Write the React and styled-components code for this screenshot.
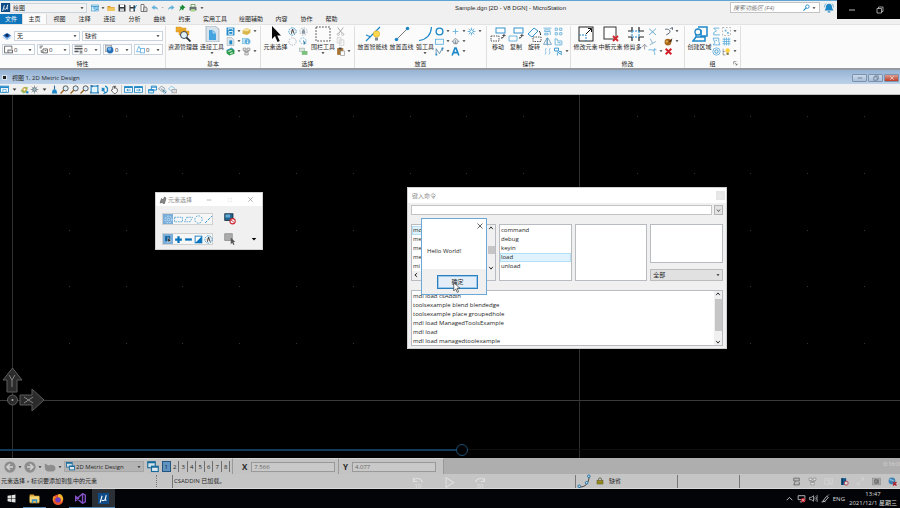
import * as React from 'react';

import styled, { createGlobalStyle } from 'styled-components';


const GlobalStyle = createGlobalStyle`
  * {
    box-sizing: border-box;
  }
  body {
    margin: 0;
    background-color: #000;
  }
  body, button, input, select {
    font-family: "Open Sans", "Noto Sans CJK SC", sans-serif;
    font-size: 6px;
    line-height: 8px;
    color: #262626;
  }
  button, select, input {
    appearance: none;
    margin: 0;
    padding: 0;
    border: 0;
    border-radius: 0;
    background: none;
    outline: none;
  }
  ul {
    margin: 0;
    padding: 0;
    list-style: none;
  }
  svg {
    display: block;
    flex: none;
  }
`

const B = '#1e88c9'
const L = '#62b0dc'
const G = '#555'

/* every drawing sits in a 16 x 16 box */
const icons = {
  mu: <><rect width="16" height="16" fill="#0d4a86" /><path d="M3 14 6 4M5.500 10c1 2 4 1 5-1L12 3M10.500 8c-.5 3 .5 3 2 2" stroke="#fff" strokeWidth="1.600" fill="none" /></>,
  layout: <><rect x="1" y="2" width="14" height="12" fill="#d9eefa" stroke={B} /><path d="M1 5h14M8 5v9M4 8h3M10 8h4M10 11h4" stroke={B} strokeWidth="1.500" /></>,
  folder: <><path d="M1 4h5l2 2h7v8H1z" fill="#d99a2b" /><path d="M3 7h13l-2 7H1z" fill="#f3c65c" /></>,
  save: <><path d="M1 1h12l2 2v12H1z" fill="#34383d" /><path d="M4 1h8v5H4z" fill="#fff" /><path d="M4 9h8v6H4z" fill="#c9ced3" /></>,
  saveSet: <><path d="M1 2h9l2 2v11H1z" fill="#34383d" /><path d="M3 2h6v4H3zM3 9h6v6H3z" fill="#fff" /><path d="M10 12 15 2" stroke={B} strokeWidth="2" /></>,
  compress: <><path d="M2 1h6v14H2z" fill="#fff" stroke={G} strokeWidth="1.500" /><path d="M8 6h4l2 3v6H7z" fill="#ddd" stroke={G} strokeWidth="1.500" /></>,
  undo: <path d="M7 2 1 7l6 5V9c4 0 6 1 7 4 0-5-3-8-7-8z" fill={L} />,
  redo: <path d="m9 2 6 5-6 5V9c-4 0-6 1-7 4 0-5 3-8 7-8z" fill={L} />,
  pin: <path d="m8 1 7 6-3 1-2 5-3-3-5 5 3-7-2-3 4 0z" fill="#198a35" />,
  print: <><path d="M4 1h8v5H4z" fill="#fff" stroke="#5a8f49" strokeWidth="1.500" /><rect x="1" y="6" width="14" height="7" fill="#6b7178" /><path d="M4 10h8v5H4z" fill="#a5d489" /></>,
  search: <><circle cx="10" cy="6" r="4" fill="none" stroke={B} strokeWidth="2" /><path d="m7 9-6 6" stroke={B} strokeWidth="2.500" /></>,
  bell: <><path d="M8 1c4 0 5 3 5 7l2 4H1l2-4c0-4 1-7 5-7M6 13h4v2H6z" fill={B} /><path d="M1 7c0-3 1-5 2-6M15 7c0-3-1-5-2-6" stroke={B} fill="none" /></>,
  gem: <><path d="m1 7 7-4 7 4-7 6z" fill="#5a9be0" /><path d="M3 7c3-4 7-4 10 0-3 4-7 4-10 0" fill="#2460b0" /><circle cx="8" cy="7" r="2.200" fill="#10264d" /><path d="m1 10 7 4 7-4" fill="none" stroke="#8fbbeb" /></>,
  level: <><path d="M1 2h13v5M6 14H1V2" fill="none" stroke={G} strokeWidth="1.500" /><rect x="7" y="9" width="8" height="5" fill="#eee" stroke={G} strokeWidth="1.500" /></>,
  lineStyle: <path d="M1 2h6M1 5h4M7 7h8v7H7zM10 10h3M4 9v4h3" fill="none" stroke={G} strokeWidth="1.500" />,
  weight: <path d="M1 2h14M1 6h14M1 7h14M1 11h7M1 12h7M10 11h5M10 14h5" stroke="#3a3f45" strokeWidth="1.600" />,
  ball: <><rect x="1" y="1" width="11" height="11" fill="#cfd8de" stroke="#888" /><circle cx="9" cy="9" r="6" fill="#2671b5" /><circle cx="8" cy="7" r="3" fill="#77b6ea" /></>,
  prio: <><path d="m5 2 5 10H1z" fill="none" stroke={L} strokeWidth="1.500" /><rect x="8" y="6" width="7" height="8" fill="#fff" stroke={L} strokeWidth="1.500" /></>,
  explorer: <><path d="M1 1h5l1 1h4v4H1zM4 4h5l1 1h4v4H4z" fill="#efab28" stroke="#c98a19" strokeWidth=".4" /><circle cx="9" cy="9" r="3.500" fill="#dff1fd" stroke="#2a333c" strokeWidth=".9" /><path d="m11.500 11.500 4 4" stroke="#2a333c" strokeWidth="1.800" /></>,
  attach: <><path d="M2 0h9l4 3v13H2z" fill="#d8e3ec" stroke="#9aa8b4" strokeWidth=".7" /><path d="M5 4h4l3 3v7H5z" fill="#43a4df" /><path d="M9 4v3h3" fill="none" stroke="#fff" strokeWidth=".6" /></>,
  models: <><rect x="1" y="1" width="14" height="14" fill={B} /><path d="M5 8h7v5H5zM4 6V3h8v3" fill="none" stroke="#fff" strokeWidth="1.500" /></>,
  doc: <><path d="M2 1h8l4 4v10H2z" fill="#e1e8ed" stroke="#9ba6af" /><path d="M6 6h5v7H6z" fill={B} /></>,
  green: <><path d="m1 6 9-4 5 4v6l-9 3-5-4z" fill="#2c9a4b" /><path d="m4 8 6-2M7 12l5-2" stroke="#c6ecd0" strokeWidth="2" /><path d="m1 6 9-4 5 4" fill="none" stroke={B} strokeWidth="1.500" /></>,
  cube: <><path d="m1 6 6-4 8 2v6l-6 4-8-2z" fill="#d9b64b" /><path d="m1 6 6-4 8 2-6 4z" fill="#f5e39b" /></>,
  info: <><rect x="1" y="3" width="10" height="9" fill="#bfe1f5" stroke={L} /><circle cx="10" cy="8" r="5" fill={L} /><path d="M10 5v1M10 8v3" stroke="#fff" strokeWidth="2" /></>,
  net: <path d="M2 2h5v4H2zM9 2h5v4H9zM5 10h6v4H5zM4 6v2h8V6M8 8v2" fill="#eee" stroke="#888" strokeWidth="1.300" />,
  arrow: <path d="m4 0 0 13 3-3 2.500 6 2.200-1-2.500-5.500H13z" fill="#0a0a0a" />,
  selAll: <><circle cx="8" cy="8" r="6.500" fill="none" stroke={B} strokeWidth="1.500" strokeDasharray="3 1.500" /><path d="m6 12 2-8 3 8M5 7h1M10 5h1" stroke="#222" strokeWidth="1.500" fill="none" /></>,
  selNone: <circle cx="8" cy="8" r="6.500" fill="none" stroke="#8b99a3" strokeWidth="1.300" strokeDasharray="2.500 2" />,
  selGrey: <><circle cx="8" cy="8" r="6.500" fill="none" stroke="#9fb3c0" strokeWidth="1.500" strokeDasharray="3 2" /><path d="M5 7h6v5H5zM6 7V4h4v3" fill="#8a97a0" /></>,
  selPrev: <><circle cx="7" cy="7" r="5.500" fill="none" stroke={L} strokeWidth="1.500" strokeDasharray="3 2" /><path d="m7 5 2 9 2-3 3 2z" fill="#3c7fa8" /></>,
  display: <><rect x="1" y="2" width="9" height="6" fill="#d9e5dc" stroke="#9aa" /><path d="M5 7h10v7H5z" fill="#7cc07f" /></>,
  fence: <rect x="1" y="1" width="14" height="14" fill="none" stroke="#444" strokeWidth=".9" strokeDasharray="1.800 1.200" />,
  cut: <><path d="m3 1 8 10M13 1 5 11" stroke="#999" strokeWidth="1.500" /><circle cx="4" cy="13" r="2" fill="none" stroke="#999" /><circle cx="12" cy="13" r="2" fill="none" stroke="#999" /></>,
  copyDoc: <path d="M2 1h7v10H2zM6 5h8v10H6z" fill="#f5f5f5" stroke="#c4c4c4" />,
  paste: <><path d="M2 2h11v12H2z" fill="#a87435" /><path d="M5 1h5v3H5z" fill="#444" /><path d="M8 7h7v8H8z" fill="#fff" stroke="#777" /></>,
  smartLine: <><path d="M1 15 15 1M1 9l5 2" stroke={B} strokeWidth="1.200" /><circle cx="11.500" cy="8" r="3.200" fill="#ffd84d" stroke="#d8a41c" strokeWidth=".5" /><path d="M10 11.500h3v3h-3z" fill="#7f8a94" /></>,
  line: <><path d="M2 14 14 2" stroke="#555" strokeWidth=".8" /><circle cx="2.500" cy="13.500" r="1.800" fill={B} /><circle cx="13.500" cy="2.500" r="1.800" fill={B} /></>,
  arc: <path d="M14.500 1C14 8 10 13.500 2 14.500" fill="none" stroke={B} strokeWidth="1.200" />,
  circle: <circle cx="8" cy="8" r="6" fill="none" stroke={B} strokeWidth="2.500" />,
  block: <rect x="1" y="4" width="14" height="9" fill="#f2f9fd" stroke={L} strokeWidth="1.500" />,
  spline: <><path d="M2 14V3l6 9 5-10v5" fill="none" stroke="#5a88a3" strokeWidth="1.500" /><path d="M12 1h3v3h-3zM1 12h3v3H1z" fill={B} /></>,
  plus: <path d="M8 3v10M3 8h10" stroke={L} strokeWidth="1.500" />,
  hatch: <path d="m8 2 6 6-3 1v3H5V9L2 8zM8 6v6" fill="#dfe3e6" stroke="#65737d" strokeWidth="1.200" />,
  bigA: <path d="m2 15 5-13h2l5 13M4 10h8" fill="none" stroke={B} strokeWidth="2.800" />,
  star: <><path d="M8 1v14M1 8h14M3 3l10 10M13 3 3 13" stroke={L} strokeWidth="1.500" /><circle cx="8" cy="8" r="3" fill="#fff" stroke={B} /></>,
  move: <><rect x="6" y="2" width="9" height="5" fill="#fff" stroke={B} strokeWidth=".9" /><path d="M1 10h8v5H1z" fill="none" stroke="#444" strokeWidth=".9" strokeDasharray="1.500 1" /><path d="M11 12c2 0 3-1 3-3M12.500 10 14 8.500 15.500 10" fill="none" stroke="#222" /></>,
  copy: <><rect x="6" y="2" width="9" height="5" fill="#fff" stroke={B} strokeWidth=".9" /><path d="M1 10h8v5H1z" fill="none" stroke={L} strokeWidth=".9" /><path d="M11 12c2 0 3-1 3-3M12.500 10 14 8.500 15.500 10" fill="none" stroke="#222" /></>,
  rotate: <><path d="m2 8 6-6 4 3-6 6z" fill="#f4fbff" stroke={B} strokeWidth=".9" /><path d="M7 11h8v4.500H7z" fill="none" stroke="#444" strokeWidth=".9" strokeDasharray="1.500 1" /><path d="M13 5c1 1 1.500 2 1.500 4" fill="none" stroke="#222" /></>,
  align: <path d="M1 2h14M3 5h9v3H3zM3 11h6v3H3zM13 8v6" fill="none" stroke={L} strokeWidth="1.500" />,
  array: <path d="M2 2h4v4H2zM10 2h4v4h-4zM2 10h4v4H2zM10 10h4v4h-4z" fill="none" stroke={L} strokeWidth="1.500" />,
  mirror: <path d="M7 2v11H1zM9 2l6 11H9M8 1v14" fill="none" stroke="#5a95b7" strokeWidth="1.400" />,
  scale: <path d="M2 3v11h12V7H6V4zM6 10h5v2" fill="none" stroke={L} strokeWidth="1.500" />,
  parallel: <path d="M6 2c-4 4 2 7-3 12M13 2c-4 4 2 7-3 12" fill="none" stroke={L} strokeWidth="1.500" strokeDasharray="5 1" />,
  stretch: <path d="M1 2h7v5H1zM5 8l9 6M6 11v4M9 8h4v4" fill="none" stroke={B} strokeWidth="1.500" />,
  modify: <><rect x="1" y="1" width="14" height="14" fill="#fff" stroke="#222" /><path d="M1 9h7v6" fill="none" stroke={B} strokeDasharray="2 1" /><path d="m8 8 5-5M10 2.500h3.500V6" stroke="#111" fill="none" /></>,
  breakEl: <><rect x="1" y="1" width="12" height="12" fill="#fff" stroke="#333" /><path d="m10 10 5 5M15 10l-5 5" stroke="#d3262f" strokeWidth="1.800" /></>,
  trim: <><path d="M4 1v4M4 11v4M11 1v4M11 11v4M0 5h4M11 5h5M0 11h4M11 11h5" stroke="#222" strokeWidth="1.200" /><path d="M4 5v6M11 5v6M4 5h7M4 11h7" stroke={B} strokeDasharray="2 1" /></>,
  cross: <path d="m2 3 12 11M14 3 2 14" stroke="#4f9cc8" strokeWidth="1.500" />,
  corner: <path d="M3 14 14 8M8 11 4 3" stroke="#79aac6" strokeWidth="1.500" />,
  fillet: <path d="M1 5h5c5 0 6 3 6 9M12 2v4M9 5h6" fill="none" stroke={L} strokeWidth="1.500" />,
  curve: <path d="M2 4c7-1 11 3 7 7l-5 3M11 3l4-2v4" fill="none" stroke="#456" strokeWidth="1.600" />,
  paint: <><circle cx="7" cy="9" r="6" fill="#a8671e" /><path d="m8 8 7-6-2 7z" fill="#4b2b0d" /><circle cx="5" cy="8" r="2" fill="#e8b552" /></>,
  del: <path d="m3 3 10 10M13 3 3 13" stroke="#cf1f2b" strokeWidth="3.500" />,
  region: <><path d="M6 1h9v9H9V4M4 11h9v4H1l3-4V8" fill="none" stroke={B} strokeWidth="1.500" /><circle cx="6" cy="6" r="3" fill="none" stroke={B} strokeWidth="1.300" /></>,
  chain: <path d="M13 2H3l5 5-5 3v4h11" fill="none" stroke={L} strokeWidth="1.600" />,
  shape: <path d="M2 2h10v6l2 6H2l3-4zM6 6h3" fill="none" stroke={L} strokeWidth="1.600" />,
  target: <><circle cx="8" cy="8" r="6.500" fill="none" stroke={L} strokeWidth="1.500" /><circle cx="8" cy="8" r="3" fill="none" stroke={B} strokeWidth="1.500" /></>,
  groupSel: <><rect x="1" y="1" width="14" height="14" fill="none" stroke="#999" strokeWidth="1.300" strokeDasharray="3 3" /><path d="M5 5h3v3H5zM9 9h3v3H9z" fill={L} /></>,
  hash: <path d="M1 4h14M1 8h14M1 12h14M4 1v14M8 1v14M12 1v14" stroke={L} strokeWidth="1.500" />,
  lamp: <><path d="M2 3v11h4M2 8h3" stroke={G} fill="none" /><circle cx="10" cy="6" r="4" fill="#ffd23d" /><path d="M8 10h4v4H8z" fill="#8c7a3c" /></>,
  launcher: <path d="M2 11V2h9M6 6l7 7M13 8v5H8" fill="none" stroke="#444" strokeWidth="1.600" />,
  views: <><rect x="1" y="2" width="14" height="11" fill="#fff" stroke={B} strokeWidth="1.500" /><path d="M1 4h14" stroke={B} strokeWidth="3" /><path d="M5 8h6v5H5z" fill="none" stroke={B} /></>,
  palette: <><path d="m1 10 7-7 6 1-2 9-6 2z" fill="#8ebd61" /><circle cx="8" cy="8" r="3" fill="#fff" stroke="#d3a43e" strokeWidth="2" /><path d="M11 11h4v4h-4z" fill={B} /></>,
  sun: <><circle cx="8" cy="8" r="3.500" fill="#9db0bd" stroke="#466" /><path d="M8 1v3M8 12v3M1 8h3M12 8h3M3 3l2 2M11 11l2 2M13 3l-2 2M3 13l2-2" stroke="#556" /></>,
  broom: <><path d="M8 1v7" stroke="#2d6d97" strokeWidth="2" /><path d="M5 8h6l2 7H3z" fill={B} /></>,
  zoom: <><circle cx="10" cy="6" r="4.500" fill="#dbeffb" stroke="#444" strokeWidth="1.500" /><path d="m7 9-6 6" stroke="#9c6a25" strokeWidth="2.500" /></>,
  fit: <><rect x="2" y="2" width="12" height="12" fill="#e4f5fd" stroke={B} strokeWidth="2" /><path d="M1 1h3v3M15 1h-3M1 15v-3M15 15v-3" fill="none" stroke="#036" /></>,
  rotView: <><path d="M3 5h5v6H3z" fill={B} /><path d="M9 2c6 1 6 11 0 12M7 11l2 3-3 1" fill="none" stroke={B} strokeWidth="2" /></>,
  pan: <path d="M5 8V3l2-1 1 4V2h2v4l3 1v5l-3 3H7L2 9z" fill="#fff" stroke="#444" strokeWidth="1.300" />,
  prev: <><rect x="1" y="3" width="14" height="10" fill="#fff" stroke={B} strokeWidth="1.500" /><path d="M1 4h14" stroke={B} strokeWidth="3" /><path d="M12 9H5M7 7 5 9l2 2" fill="none" stroke={B} strokeWidth="1.500" /></>,
  next: <><rect x="1" y="3" width="14" height="10" fill="#fff" stroke={B} strokeWidth="1.500" /><path d="M1 4h14" stroke={B} strokeWidth="3" /><path d="M4 9h7M9 7l2 2-2 2" fill="none" stroke={B} strokeWidth="1.500" /></>,
  copyView: <path d="M6 2h9v7H6zM1 8h9v6H1zM6 4h9M1 10h9" fill="#fff" stroke={B} strokeWidth="1.600" />,
  clip: <><path d="m1 7 5-5 6 4-4 6z" fill="#eef6fa" stroke="#678" strokeWidth="1.200" /><circle cx="12" cy="12" r="2.500" fill="#fff" stroke={B} /><path d="m5 6 9 8" stroke="#333" /></>,
  mask: <><path d="m1 7 5-5 6 4-4 6z" fill="#eef6fa" stroke={L} strokeWidth="1.200" /><rect x="7" y="8" width="8" height="6" fill="#ddd" stroke="#888" /></>,
  pencils: <path d="m2 14 3-9 3 3 3-6 3 2-3 11H8l-2-2z" fill="#888" stroke="#444" />,
  pickAll: <><circle cx="8" cy="8" r="6" fill="none" stroke="#d9efff" strokeWidth="1.500" strokeDasharray="3 2" /><circle cx="8" cy="8" r="2.500" fill="none" stroke="#d9efff" /></>,
  pickBlock: <rect x="1" y="4" width="14" height="8" fill="none" stroke={B} strokeWidth="1.200" strokeDasharray="3 1.500" />,
  pickShape: <path d="M5 4h10l-4 8H1z" fill="none" stroke={B} strokeWidth="1.200" strokeDasharray="3 1.500" />,
  pickCircle: <circle cx="8" cy="8" r="6.500" fill="none" stroke={B} strokeWidth="1.300" strokeDasharray="3 2" />,
  pickLine: <path d="M2 14 14 2" stroke={B} strokeWidth="1.600" strokeDasharray="5 2" />,
  pickNew: <><path d="M2 2h9v9H2z" fill="#0d5f9b" /><path d="m7 4 0 10 2-3h4z" fill="#000" stroke="#fff" /></>,
  add: <path d="M8 2v12M2 8h12" stroke="#0873bd" strokeWidth="4" />,
  minus: <path d="M2 8h12" stroke="#0873bd" strokeWidth="4" />,
  invert: <><rect x="2" y="2" width="12" height="12" fill="#fff" stroke="#0873bd" strokeWidth="1.500" /><path d="M14 2v12H2z" fill="#0873bd" /></>,
  lockSel: <><rect x="1" y="1" width="11" height="9" fill="#22658f" stroke="#123" /><path d="M2 2h6v4H2z" fill="#64aad5" /><circle cx="11.500" cy="11" r="3.500" fill="#fff" stroke="#c92630" strokeWidth="1.400" /><path d="m9 9 5 4" stroke="#c92630" strokeWidth="1.200" /></>,
  greySel: <><rect x="1" y="1" width="10" height="9" fill="#ababab" stroke="#888" /><path d="m9 6 0 9 2-2 1.500 3 1.500-1-1.500-3H15z" fill="#555" /></>,
  back: <><circle cx="8" cy="8" r="7.500" fill="#8d8d8d" /><path d="M12 8H5M8 4 4 8l4 4" fill="none" stroke="#d2d2d2" strokeWidth="2" /></>,
  forward: <><circle cx="8" cy="8" r="7.500" fill="#8d8d8d" /><path d="M4 8h7M8 4l4 4-4 4" fill="none" stroke="#d2d2d2" strokeWidth="2" /></>,
  hand: <path d="M1 4c2-1 3 2 5 2 3-2 7-1 9 2 1 4-1 6-4 6H6C1 14 1 9 1 4" fill="#8d8d8d" />,
  wins: <><rect x="1" y="1" width="10" height="8" fill="#cfe2ec" stroke="#17699b" strokeWidth="1.500" /><rect x="6" y="7" width="9" height="7" fill="#dce8ee" stroke="#17699b" strokeWidth="1.500" /><path d="M1 2h10M6 8h9" stroke="#17699b" strokeWidth="2" /></>,
  snap: <><path d="M2 15c8 0 11-4 12-12" fill="none" stroke="#333" /><circle cx="2.500" cy="14" r="1.500" fill="#bde" stroke="#17699b" /><circle cx="11" cy="10" r="1.500" fill="#bde" stroke="#17699b" /><circle cx="13.500" cy="2.500" r="1.500" fill="#bde" stroke="#17699b" /></>,
  lock: <><path d="M5 7V4c0-3 6-3 6 0v3" fill="none" stroke="#5b5b3a" strokeWidth="1.600" /><rect x="2" y="7" width="12" height="7" fill="#968c1d" stroke="#555026" /></>,
  stack: <path d="M3 2h10v5H3zM6 7l-3 7h10V9" fill="#bbb" stroke="#666" strokeWidth="1.500" />,
  book: <><path d="M2 2h9v12H2z" fill="#15588a" /><path d="M4 2v12" stroke="#073358" strokeWidth="2" /><circle cx="11" cy="11" r="3.500" fill="#ddd" stroke="#b0303a" strokeWidth="1.500" /></>,
  box: <><rect x="1" y="2" width="14" height="12" fill="#aaa" stroke="#888" /><path d="M5 5h4v6H5zM11 4v8" fill="none" stroke="#555" strokeWidth="1.500" /></>,
  globe: <><circle cx="7" cy="7" r="6" fill="#3a83b3" /><path d="M3 4c3 3 5-1 7 4" stroke="#a3c9df" strokeWidth="2" fill="none" /><path d="m9 9 6 6M15 9l-6 6" stroke="#b01c26" strokeWidth="2.500" /></>,
  windows: <path d="m1 3 6-1v5.500H1zM8 2l7-1v6.500H8zM1 8.500h6V14l-6-1zM8 8.500h7V15l-7-1z" fill="#e3e3e3" />,
  files: <><path d="M1 2h6l1 2h7v11H1z" fill="#dba53b" /><path d="M1 5h14v8H1z" fill="#f4d774" /><path d="M4 15v-6h8v6h-2v-3H6v3z" fill="#3f91c4" /></>,
  firefox: <><circle cx="8" cy="9" r="7" fill="#e8532a" /><path d="M8 2c4-3 7 3 7 6l-4 6c3-5 0-8-3-8z" fill="#f6b32a" /><circle cx="8" cy="9" r="3.500" fill="#6d3fc0" /><path d="M2 4c1 1 3 1 4 2-4 1-4 4-3 6-3-2-2-6-1-8" fill="#f28a2c" /></>,
  vs: <path d="m11 1 4 2v10l-4 2-8-7 8-7v14M1 5l4 3-4 3z" fill="none" stroke="#8350c4" strokeWidth="2" />,
  up: <path d="m3 11 5-5 5 5" fill="none" stroke="#ddd" strokeWidth="1.500" />,
  pc: <><path d="M2 3h12v7H2zM5 14h4" fill="none" stroke="#ccc" strokeWidth="1.500" /><circle cx="11" cy="11" r="4" fill="#c62733" /><path d="m9 9 4 4M13 9l-4 4" stroke="#fff" /></>,
  sound: <path d="M1 6h3l4-3v10l-4-3H1zM10 6c1 1 1 3 0 4M12 4c2 2 2 6 0 8M14 2c3 3 3 9 0 12" fill="none" stroke="#ccc" strokeWidth="1.300" />,
  ink: <path d="m3 13 7-9 3 2-6 7zM1 14c2 2 4-3 7 0M12 3l2-2" fill="none" stroke="#ccc" strokeWidth="1.500" />,
  close: <path d="m3 3 10 10M13 3 3 13" stroke="currentColor" strokeWidth="1.500" />,
  min: <path d="M2 8h12" stroke="currentColor" strokeWidth="1.800" />,
  max: <rect x="3" y="3" width="10" height="10" fill="none" stroke="currentColor" strokeWidth="1.300" />,
  restore: <path d="M2 5h9v9H2zM5 5V2h9v9h-3" fill="none" stroke="currentColor" strokeWidth="1.500" />,
  chevDown: <path d="m3 5 5 6 5-6" fill="none" stroke="currentColor" strokeWidth="2.500" />,
  chevUp: <path d="m3 11 5-6 5 6" fill="none" stroke="currentColor" strokeWidth="2.500" />,
  chevLeft: <path d="m11 3-6 5 6 5" fill="none" stroke="currentColor" strokeWidth="2.500" />,
  caret: <path d="M2 5h12l-6 7z" fill="currentColor" />,
  skipBack: <path d="M2 1v5h5M2 5c3-5 10-4 12 2" fill="none" stroke="currentColor" strokeWidth="1.400" />,
  skipForward: <path d="M14 1v5H9M14 5C11 0 4 1 2 7" fill="none" stroke="currentColor" strokeWidth="1.400" />,
  play: <path d="m3 1 11 7-11 7z" fill="none" stroke="currentColor" strokeWidth="1.500" />,
  caption: <path d="M1 3h14v10H1zM4 6h8M8 9h5v3H8z" fill="none" stroke="currentColor" />,
  expand: <path d="M2 14 14 2M9 2h5v5M2 9v5h5" fill="none" stroke="currentColor" />,
  pointer: <path d="M4 1v12l3-3 2 5 2-1-2-5h4z" fill="#fff" stroke="#333" />,
}

const Icon = ({name, size = 8}) => (
  <svg width={size} height={size} viewBox="0 0 16 16" aria-hidden="true">{icons[name]}</svg>
)

const Page = styled.div`
  display: flex;
  flex-direction: column;
  min-height: 100vh;
  overflow: hidden;
`

const TitleBar = styled.header`
  display: flex;
  align-items: center;
  height: 14px;
  border-top: 1px solid #5da6d3;
  background-color: #f0f0f0;
  padding-left: 1px;
`

const QuickTools = styled.div`
  display: flex;
  align-items: center;
  gap: 2px;
  margin-left: 3px;
`

const IconButton = styled.button`
  display: flex;
  flex: none;
  align-items: center;
  justify-content: center;
  width: ${props => props.$width || 9}px;
  height: ${props => props.$height || 9}px;
  color: ${props => props.$color || '#333'};
`

const AppTitle = styled.h1`
  flex: 1;
  margin: 0;
  padding-right: 164px;
  text-align: right;
  font-family: "Liberation Sans", sans-serif;
  font-size: 6px;
  font-weight: 400;
  white-space: nowrap;
`

const Search = styled.label`
  display: flex;
  align-items: center;
  width: 90px;
  height: 11px;
  border: 1px solid #c3c3c3;
  background-color: #fff;
  padding-right: 2px;
  & input {
    flex: 1;
    min-width: 0;
    padding-left: 2px;
    font-style: italic;
  }
  & input::placeholder {
    color: #777;
  }
`

const TitleEnd = styled.div`
  display: flex;
  justify-content: center;
  width: 80px;
  padding-right: 62px;
`

const Tabs = styled.nav`
  display: flex;
  height: 10px;
  background-color: #f0f0f0;
`

const Tab = styled.button`
  min-width: 25px;
  padding: 0 6px;
  ${props => props.$active && 'background-color: #fbfbfb; box-shadow: inset 1px 0 #d9d9d9, inset -1px 0 #d9d9d9;'}
`

const FileTab = styled(Tab)`
  min-width: 22px;
  padding: 0;
  background-color: #0f76bd;
  color: #fff;
`

const Ribbon = styled.section`
  display: flex;
  height: 46px;
  padding-top: 1px;
  border-top: 1px solid #e2e2e2;
  border-bottom: 2px solid #9599a1;
  background-color: #fbfbfb;
`

const Group = styled.section`
  position: relative;
  display: flex;
  flex: none;
  flex-direction: column;
  justify-content: space-between;
  width: ${props => props.$width}px;
  border-right: 1px solid #e0e0e0;
`

const GroupBody = styled.div`
  display: flex;
  padding-left: 2px;
`

const GroupName = styled.div`
  height: 8px;
  text-align: center;
`

const Launcher = styled(IconButton)`
  position: absolute;
  right: 0;
  bottom: 0;
`

const BigButton = styled.button`
  display: flex;
  flex-direction: column;
  align-items: center;
  width: ${props => props.$width}px;
  height: 32px;
  white-space: nowrap;
  & > svg + span {
    margin-top: 1px;
  }
`

const SmallGrid = styled.div`
  display: grid;
  grid-template-rows: repeat(3, 10px);
  grid-template-columns: ${props => props.$columns};
  align-content: start;
`

const SmallCell = styled.div`
  display: flex;
  align-items: center;
  color: #333;
`

const Properties = styled.div`
  display: flex;
  flex-direction: column;
  gap: 3px;
  padding: 5px 2px 0;
`

const PropertyRow = styled.div`
  display: flex;
  align-items: center;
  gap: 2px;
`

const Picker = styled.label`
  display: flex;
  align-items: center;
  flex: ${props => props.$flex || 'none'};
  width: ${props => props.$width ? props.$width + 'px' : 'auto'};
  height: ${props => props.$height || 11}px;
  padding: 0 2px 0 1px;
  border: 1px solid ${props => props.$border || '#c9d4df'};
  background-color: ${props => props.$back || '#fff'};
  & select {
    flex: 1;
    min-width: 0;
    padding-left: 1px;
  }
`

const ViewTitle = styled.div`
  display: flex;
  align-items: center;
  gap: 4px;
  height: 14px;
  padding: 1px 1px 0 2px;
  background-image: linear-gradient(#96b3d3, #bdd2ea);
`

const ViewMark = styled.span`
  width: 5px;
  height: 5px;
  border: 1px solid #d8e4f0;
  background-color: #222;
`

const ViewName = styled.span`
  flex: 1;
  padding-left: 1px;
`

const FrameButton = styled.button`
  display: flex;
  align-items: center;
  justify-content: center;
  width: 15px;
  height: 8px;
  margin-left: -3px;
  border: 1px solid #7d93ad;
  border-radius: 1px;
  background-image: ${props => props.$danger ? 'linear-gradient(#dc9b8e, #bd3d28)' : 'linear-gradient(#c9d9ea, #a9bfd9)'};
  color: ${props => props.$danger ? '#fff' : '#4e6077'};
`

const ViewTools = styled.div`
  display: flex;
  align-items: center;
  gap: 1px;
  height: 11px;
  border-bottom: 1px solid #c0c0c0;
  background-color: #f1f1f1;
`

const Divider = styled.span`
  width: 1px;
  height: 9px;
  margin: 0 1px;
  background-color: #c8c8c8;
`

const Canvas = styled.main`
  position: relative;
  flex: 1;
  min-height: 363px;
  background-color: #000;
`

const Drawing = styled.svg`
  position: absolute;
  inset: 0;
  width: 100%;
  height: 100%;
`

const Playback = styled.div`
  position: absolute;
  left: 0;
  right: 0;
  bottom: 2px;
  height: 13px;
  display: flex;
  align-items: center;
`

const Played = styled.div`
  width: 456px;
  height: 2px;
  background-color: #123a58;
`

const Knob = styled.button`
  width: 12px;
  height: 12px;
  border: 1px solid #1d4f75;
  border-radius: 50%;
`

const Rest = styled.div`
  flex: 1;
  height: 1px;
  background-color: #101010;
`

const Floating = styled.section`
  position: absolute;
  top: ${props => props.$top}px;
  left: ${props => props.$left}px;
  width: ${props => props.$width}px;
  border: 1px solid #d0d0d0;
  background-color: #f0f0f0;
`

const FloatTitle = styled.div`
  display: flex;
  align-items: center;
  height: ${props => props.$height}px;
  padding: 0 1px 0 3px;
  background-color: #fff;
  color: #8d8d8d;
  & > span {
    flex: 1;
    padding-left: 1px;
  }
`

const DimClose = styled(IconButton)`
  background-color: #e6e6e6;
`

const PickArea = styled.div`
  display: grid;
  grid-template-columns: 51px 13px 1fr;
  column-gap: 11px;
  row-gap: 8px;
  padding: 7px 4px 4px 6px;
  align-items: center;
`

const PickRow = styled.div`
  display: flex;
  height: 12px;
  border: 1px solid #d0d0d0;
  background-color: #f7f7f7;
`

const PickButton = styled(IconButton)`
  width: 10px;
  height: 10px;
  background-color: ${props => props.$active ? '#79aedb' : 'transparent'};
`

const KeyinBody = styled.div`
  display: flex;
  flex-direction: column;
  gap: 9px;
  padding: 2px 3px;
`

const KeyinLine = styled.div`
  display: flex;
  gap: 2px;
  & input {
    flex: 1;
    height: 10px;
    border: 1px solid #c4c4c4;
    background-color: #fff;
  }
  & button {
    border: 1px solid #b5b5b5;
    background-color: #e2e2e2;
  }
`

const Columns = styled.div`
  display: grid;
  grid-template-columns: 85px 1fr 1fr 1fr;
  gap: 3px;
`

const ListBox = styled.div`
  position: relative;
  display: flex;
  height: ${props => props.$height}px;
  border: 1px solid #b8bbc0;
  background-color: #fff;
  overflow: hidden;
  & > ul {
    flex: 1;
    padding-top: 1px;
  }
`

const Item = styled.li`
  height: 9px;
  padding-left: 1px;
  line-height: 9px;
  white-space: nowrap;
  ${props => props.$active && 'background-color: #dff2fd; box-shadow: inset 0 0 0 1px #b4e0f7;'}
`

const Scroll = styled.div`
  display: flex;
  flex-direction: column;
  align-items: center;
  width: 8px;
  margin-bottom: ${props => props.$bottom || 0}px;
  background-color: #f0f0f0;
`

const SideScroll = styled.div`
  position: absolute;
  left: 0;
  right: 0;
  bottom: 0;
  height: 9px;
  padding: 1px;
  background-color: #f0f0f0;
`

const Track = styled.div`
  flex: 1;
  width: 7px;
  padding-top: ${props => props.$start}px;
`

const Thumb = styled.div`
  height: ${props => props.$height}px;
  background-color: #c6c6c6;
`

const SideColumn = styled.div`
  display: flex;
  flex-direction: column;
  gap: 6px;
`

const Message = styled.section`
  position: absolute;
  top: 123px;
  left: 421px;
  width: 66px;
  border: 1px solid #6ba8d8;
  background-color: #fff;
`

const MessageTop = styled.div`
  display: flex;
  justify-content: flex-end;
  padding: 2px 2px 0 0;
`

const MessageText = styled.p`
  margin: 0;
  padding: 17px 5px 14px;
  white-space: nowrap;
`

const MessageFoot = styled.div`
  display: flex;
  justify-content: flex-end;
  padding: 6px 8px 5px;
  background-color: #f0f0f0;
`

const OkButton = styled.button`
  width: 41px;
  height: 14px;
  border: 1px solid #2a7fc0;
  box-shadow: inset 0 0 0 1px #9cc8ea;
  background-color: #e3eef8;
`

const Cursor = styled.div`
  position: absolute;
  top: 187px;
  left: 451px;
`

const StatusTop = styled.div`
  display: flex;
  align-items: center;
  height: 16px;
  background-color: #aeaeae;
`

const StatusPanel = styled.div`
  display: flex;
  align-items: center;
  gap: 2px;
  width: ${props => props.$width}px;
  height: 16px;
  padding: 0 ${props => props.$right || 3}px 0 ${props => props.$left || 4}px;
  border-top: 1px solid #d4d4d4;
  border-right: 1px solid #999;
  background-color: #c3c3c3;
`

const ViewNumbers = styled.div`
  display: flex;
  width: 68px;
`

const ViewNumber = styled.button`
  flex: 1;
  height: 11px;
  text-align: center;
  box-shadow: ${props => props.$active ? 'inset 0 0 0 1px #24557f' : 'inset -1px 0 #6e6e6e'};
  background-color: ${props => props.$active ? '#5c93c2' : 'transparent'};
`

const Coord = styled.label`
  display: flex;
  flex: 1;
  align-items: center;
  gap: 4px;
  font-weight: 700;
  font-size: 8px;
  & input {
    flex: 1;
    min-width: 0;
    height: 10px;
    padding-left: 2px;
    border: 1px solid #999;
    background-color: #c9c9c9;
    color: #666;
  }
`

const StatusBar = styled.footer`
  position: relative;
  display: flex;
  align-items: center;
  height: 15px;
  border-bottom: 1px solid #dadada;
  background-color: #c5c5c5;
`

const StatusCell = styled.div`
  display: flex;
  align-items: center;
  gap: 5px;
  flex: ${props => props.$flex || 'none'};
  width: ${props => props.$width ? props.$width + 'px' : 'auto'};
  height: 13px;
  padding-left: 1px;
  border-right: 1px solid #777;
  white-space: nowrap;
`

const Prompt = styled.div`
  width: 157px;
  height: 12px;
  padding: 2px 0 0 1px;
  border-right: 1px dotted #777;
  white-space: nowrap;
`

const StatusIcons = styled.div`
  display: flex;
  justify-content: flex-end;
  gap: 7px;
  width: 160px;
  padding-right: 3px;
`

const PlayerControls = styled.div`
  position: absolute;
  left: 412px;
  top: 3px;
  display: flex;
  gap: 19px;
`

const Control = styled.button`
  display: flex;
  flex-direction: column;
  align-items: center;
  width: 12px;
  color: #e0e0e0;
  line-height: 6px;
  & span {
    margin-top: -6px;
  }
`

const PlayTime = styled.span`
  flex: 1;
  overflow: hidden;
  height: 12px;
  text-align: right;
  color: #d6d6d6;
  white-space: nowrap;
`

const Taskbar = styled.nav`
  display: flex;
  align-items: center;
  height: 19px;
  background-color: #020407;
  color: #ddd;
`

const Task = styled.button`
  display: flex;
  align-items: center;
  justify-content: center;
  width: 23px;
  height: 19px;
  background-color: ${props => props.$active ? '#2b3036' : 'transparent'};
  box-shadow: ${props => props.$open ? 'inset 0 -1px #5b8cb8' : 'none'};
`

const Tray = styled.div`
  display: flex;
  align-items: center;
  gap: 3px;
  margin-left: auto;
  padding-right: 2px;
`

const Clock = styled.time`
  width: 50px;
  line-height: 9px;
  text-align: center;
  white-space: nowrap;
`

const PlayerFrame = styled.div`
  position: absolute;
  top: 0;
  right: 0;
  display: flex;
  align-items: center;
  width: 63px;
  height: 19px;
  background-color: #000;
  padding-left: 10px;
  gap: 19px;
`

const tabs = ['主页', '视图', '注释', '连接', '分析', '曲线', '约束', '实用工具', '绘图辅助', '内容', '协作', '帮助']

const Choice = ({label, icon, value, ...rest}) => (
  <Picker {...rest}>
    {icon && <Icon name={icon} size={9} />}
    <select aria-label={label} defaultValue={value}><option>{value}</option></select>
    <Icon name="caret" size={4} />
  </Picker>
)

const Big = ({icon, label, width, size = 16, menu}) => (
  <BigButton $width={width}>
    <Icon name={icon} size={size} />
    <span>{label}</span>
    {menu && <Icon name="caret" size={4} />}
  </BigButton>
)

/* a name that ends in + carries a drop-down arrow */
const Small = ({columns, names}) => (
  <SmallGrid $columns={columns}>
    {names.map((name, i) => (
      <SmallCell key={i}>
        {name && <IconButton aria-label={name}><Icon name={name.replace('+', '')} size={9} /></IconButton>}
        {name.endsWith('+') && <IconButton $width={7} aria-label="more"><Icon name="caret" size={4} /></IconButton>}
      </SmallCell>
    ))}
  </SmallGrid>
)

const RibbonGroup = ({name, width, children}) => (
  <Group $width={width}>
    <GroupBody>{children}</GroupBody>
    <GroupName>{name}</GroupName>
  </Group>
)

const TopBar = () => (
  <>
    <TitleBar>
      <Icon name="mu" size={9} />
      <Choice label="工作流" value="绘图" $width={77} $height={10} $back="#f3f3f3" />
      <QuickTools>
        <IconButton aria-label="layout"><Icon name="layout" /></IconButton>
        <IconButton $width={3} aria-label="more"><Icon name="caret" size={4} /></IconButton>
        {['folder', 'save', 'saveSet', 'compress', 'undo'].map(name => (
          <IconButton key={name} aria-label={name}><Icon name={name} size={8} /></IconButton>
        ))}
        <IconButton $width={3} $color="#aaa" aria-label="more"><Icon name="caret" size={3} /></IconButton>
        {['redo', 'pin', 'print'].map(name => (
          <IconButton key={name} aria-label={name}><Icon name={name} size={8} /></IconButton>
        ))}
        <IconButton $width={5} aria-label="more"><Icon name="caret" size={4} /></IconButton>
      </QuickTools>
      <AppTitle>Sample.dgn [2D - V8 DGN] - MicroStation</AppTitle>
      <Search>
        <input aria-label="搜索功能区" placeholder="搜索功能区 (F4)" />
        <Icon name="search" size={7} />
        <IconButton $width={7} aria-label="more"><Icon name="caret" size={4} /></IconButton>
      </Search>
      <TitleEnd><Icon name="bell" size={10} /></TitleEnd>
    </TitleBar>
    <Tabs>
      <FileTab>文件</FileTab>
      {tabs.map((tab, i) => <Tab key={tab} $active={i === 0}>{tab}</Tab>)}
    </Tabs>
  </>
)

const RibbonBar = () => (
  <Ribbon>
    <Group $width={166}>
      <Properties>
        <PropertyRow>
          <Icon name="gem" size={10} />
          <Choice label="模板" value="无" $flex="4" $height={10} />
          <Choice label="图层" value="缺省" $flex="5" $height={10} />
        </PropertyRow>
        <PropertyRow>
          <Choice label="颜色" icon="level" value="0" $flex="7" />
          <Choice label="线型" icon="lineStyle" value="0" $flex="7" />
          <Choice label="线宽" icon="weight" value="0" $flex="6" />
          <Choice label="透明度" icon="ball" value="0" $flex="6" />
          <Choice label="优先级" icon="prio" value="0" $flex="6" />
        </PropertyRow>
      </Properties>
      <GroupName>特性</GroupName>
    </Group>
    <RibbonGroup name="基本" width={95}>
      <Big icon="explorer" label="资源管理器" width={30} />
      <Big icon="attach" label="连接工具" width={28} menu />
      <Small columns="16px 16px" names={['models+', 'cube+', 'doc+', 'info', 'green+', 'net+']} />
    </RibbonGroup>
    <RibbonGroup name="选择" width={94}>
      <Big icon="arrow" label="元素选择" width={25} />
      <Small columns="11px 11px" names={['selAll', 'selGrey', 'selNone', 'selPrev', '', 'display']} />
      <Big icon="fence" label="围栏工具" width={26} menu />
      <Small columns="16px" names={['cut', 'copyDoc', 'paste+']} />
    </RibbonGroup>
    <RibbonGroup name="放置" width={132}>
      <Big icon="smartLine" label="放置智能线" width={31} />
      <Big icon="line" label="放置直线" width={27} />
      <Big icon="arc" label="弧工具" width={20} menu />
      <Small columns="16px 16px 16px" names={['circle+', 'plus+', 'star+', 'block+', 'hatch+', '', 'spline+', 'bigA+', '']} />
    </RibbonGroup>
    <RibbonGroup name="操作" width={84}>
      <Big icon="move" label="移动" width={18} />
      <Big icon="copy" label="复制" width={18} />
      <Big icon="rotate" label="旋转" width={18} />
      <Small columns="11px 16px" names={['align', 'array', 'mirror', 'scale', 'parallel', 'stretch+']} />
    </RibbonGroup>
    <RibbonGroup name="修改" width={114}>
      <Big icon="modify" label="修改元素" width={25} />
      <Big icon="breakEl" label="中断元素" width={25} />
      <Big icon="trim" label="修剪多个" width={25} />
      <Small columns="16px 16px" names={['cross', 'curve+', 'corner', 'paint+', 'fillet+', 'del']} />
    </RibbonGroup>
    <Group $width={56}>
      <GroupBody>
        <Big icon="region" label="创建区域" width={25} />
        <Small columns="10px 16px" names={['chain', 'groupSel+', 'shape', 'hash+', 'target', 'lamp+']} />
      </GroupBody>
      <GroupName>组</GroupName>
      <Launcher aria-label="组设置"><Icon name="launcher" size={5} /></Launcher>
    </Group>
  </Ribbon>
)

const ViewBar = () => (
  <>
    <ViewTitle>
      <ViewMark />
      <ViewName>视图 1, 2D Metric Design</ViewName>
      <FrameButton aria-label="最小化"><Icon name="min" size={6} /></FrameButton>
      <FrameButton aria-label="还原"><Icon name="restore" size={6} /></FrameButton>
      <FrameButton $danger aria-label="关闭"><Icon name="close" size={6} /></FrameButton>
    </ViewTitle>
    <ViewTools>
      {['views', 'caret', 'palette', 'sun', 'caret', 'broom', 'zoom', 'zoom', 'zoom', 'fit', 'rotView', 'pan', '', 'prev', 'next', '', 'copyView', 'clip', 'mask'].map((name, i) => (
        name ? (
          <IconButton key={i} aria-label={name}>
            <Icon name={name} size={name === 'caret' ? 5 : 9} />
          </IconButton>
        ) : <Divider key={i} />
      ))}
    </ViewTools>
  </>
)

const Grid = () => {
  const dots = []
  for (let x = 1; x < 16; x++) {
    for (let y = 0; y < 6; y++) {
      if (x !== 10 && y !== 5) dots.push(<rect key={x + '-' + y} x={Math.round(12 + x * 56.8)} y={Math.round(21 + y * 56.8)} width="1" height="1" fill="#343434" />)
    }
  }
  return (
    <Drawing aria-hidden="true">
      <path d="M12.500 0v363M579.500 0v363" stroke="#2e2e2e" />
      <path d="M0 305.500h900" stroke="#3a3a3a" />
      {dots}
      <g fill="#2b2b2b" stroke="#5d5d5d">
        <path d="M12.500 273 22 285h-5v12H7v-12H3z" />
        <path d="M20 300h12v-6l12 11-12 11v-6H20z" />
        <circle cx="12.500" cy="305" r="5" />
      </g>
      <path d="m9 280 3 5 3-5M12 285v7M24 302l9 6M24 308l9-6" stroke="#858585" fill="none" />
      <circle cx="12.500" cy="305" r="1" fill="#aaa" />
    </Drawing>
  )
}

const ElementSelection = () => (
  <Floating $top={97} $left={155} $width={108}>
    <FloatTitle $height={13}>
      <Icon name="pencils" size={8} />
      <span>元素选择</span>
      <IconButton $width={21} $color="#999" aria-label="最小化"><Icon name="min" size={6} /></IconButton>
      <IconButton $width={21} $color="#e3e3e3" aria-label="最大化"><Icon name="max" size={6} /></IconButton>
      <IconButton $width={21} $color="#888" aria-label="关闭"><Icon name="close" size={7} /></IconButton>
    </FloatTitle>
    <PickArea>
      <PickRow>
        {['pickAll', 'pickBlock', 'pickShape', 'pickCircle', 'pickLine'].map((name, i) => (
          <PickButton key={name} $active={i === 0} aria-label={name}><Icon name={name} size={9} /></PickButton>
        ))}
      </PickRow>
      <IconButton $width={12} $height={12} aria-label="lock"><Icon name="lockSel" size={12} /></IconButton>
      <span />
      <PickRow>
        {['pickNew', 'add', 'minus', 'invert', 'selAll'].map((name, i) => (
          <PickButton key={name} $active={i === 0} aria-label={name}><Icon name={name} size={9} /></PickButton>
        ))}
      </PickRow>
      <IconButton $width={12} $height={12} aria-label="handles"><Icon name="greySel" size={12} /></IconButton>
      <IconButton $color="#000" $width={12} $height={12} aria-label="more"><Icon name="caret" size={6} /></IconButton>
    </PickArea>
  </Floating>
)

const List = ({items, active, height, label, children}) => (
  <ListBox $height={height}>
    <ul role="listbox" aria-label={label}>
      {items.map((item, i) => (
        <Item key={i} role="option" aria-selected={i === active} $active={i === active}>{item}</Item>
      ))}
    </ul>
    {children}
  </ListBox>
)

const KeyIn = () => (
  <Floating $top={92} $left={407} $width={320}>
    <FloatTitle $height={15}>
      <span>键入命令</span>
      <DimClose $color="#f6f6f6" aria-label="关闭"><Icon name="close" size={5} /></DimClose>
    </FloatTitle>
    <KeyinBody>
      <KeyinLine>
        <input aria-label="键入命令" />
        <IconButton $height={10} aria-label="历史"><Icon name="chevDown" size={5} /></IconButton>
      </KeyinLine>
      <Columns>
        <List height={57} label="第一级" items={['md', 'me', 'me', 'me', 'mi']} active={0}>
          <Scroll $bottom={9}>
            <Icon name="chevUp" size={6} />
            <Track $start={15}><Thumb $height={8} /></Track>
            <Icon name="chevDown" size={6} />
          </Scroll>
          <SideScroll><Icon name="chevLeft" size={6} /></SideScroll>
        </List>
        <List height={57} label="第二级" items={['command', 'debug', 'keyin', 'load', 'unload']} active={3} />
        <List height={57} label="第三级" items={[]} />
        <SideColumn>
          <List height={39} label="第四级" items={[]} />
          <Choice label="过滤" value="全部" $height={12} $back="#e1e1e1" $border="#bcbcbc" />
        </SideColumn>
      </Columns>
      <List
        height={56}
        label="历史记录"
        items={['mdl load csAddin', 'toolsexample blend blendedge', 'toolsexample place groupedhole', 'mdl load ManagedToolsExample', 'mdl load', 'mdl load managedtoolexample']}
      >
        <Scroll>
          <Icon name="chevUp" size={6} />
          <Track $start={2}><Thumb $height={32} /></Track>
          <Icon name="chevDown" size={6} />
        </Scroll>
      </List>
    </KeyinBody>
  </Floating>
)

const HelloBox = () => (
  <>
    <Message role="dialog" aria-label="Hello World!">
      <MessageTop>
        <IconButton aria-label="关闭"><Icon name="close" size={8} /></IconButton>
      </MessageTop>
      <MessageText>Hello World!</MessageText>
      <MessageFoot><OkButton>确定</OkButton></MessageFoot>
    </Message>
    <Cursor><Icon name="pointer" size={11} /></Cursor>
  </>
)

const Status = () => (
  <>
    <StatusTop>
      <StatusPanel $width={233} $right={2}>
        {['back', 'forward', 'hand'].map(name => (
          <React.Fragment key={name}>
            <IconButton $width={12} $height={12} aria-label={name}><Icon name={name} size={12} /></IconButton>
            <IconButton $width={4} aria-label="more"><Icon name="caret" size={4} /></IconButton>
          </React.Fragment>
        ))}
        <Choice label="视图组" icon="wins" value="2D Metric Design" $flex="1" $back="#b4b4b4" $border="#a6a6a6" />
        <IconButton $width={14} $height={12} aria-label="视图"><Icon name="wins" size={12} /></IconButton>
        <ViewNumbers>
          {[1, 2, 3, 4, 5, 6, 7, 8].map(n => <ViewNumber key={n} $active={n === 1}>{n}</ViewNumber>)}
        </ViewNumbers>
      </StatusPanel>
      <StatusPanel $width={106} $left={9}>
        <Coord>X <input defaultValue="7.566" /></Coord>
      </StatusPanel>
      <StatusPanel $width={105} $right={7}>
        <Coord>Y <input defaultValue="4.077" /></Coord>
      </StatusPanel>
      <PlayTime>0:16:0</PlayTime>
    </StatusTop>
    <StatusBar>
      <Prompt>元素选择 » 标识要添加到集中的元素</Prompt>
      <StatusCell $width={16} />
      <StatusCell $flex="1">CSADDIN 已加载。</StatusCell>
      <StatusCell $width={102}>
        <Icon name="snap" size={14} />
        <Icon name="lock" size={8} />
        缺省
      </StatusCell>
      <StatusCell $width={62} />
      <StatusIcons>
        {['stack', 'net', 'caption', 'book', 'expand', 'box', 'globe'].map(name => (
          <IconButton key={name} $color="#dadada" aria-label={name}><Icon name={name} size={9} /></IconButton>
        ))}
      </StatusIcons>
      <PlayerControls>
        <Control aria-label="后退 10 秒"><Icon name="skipBack" size={12} /><span>10</span></Control>
        <Control aria-label="播放"><Icon name="play" size={11} /></Control>
        <Control aria-label="前进 30 秒"><Icon name="skipForward" size={12} /><span>30</span></Control>
      </PlayerControls>
    </StatusBar>
  </>
)

const WindowsBar = () => (
  <Taskbar>
    <Task aria-label="开始"><Icon name="windows" size={9} /></Task>
    <Task $open aria-label="文件资源管理器"><Icon name="files" size={11} /></Task>
    <Task aria-label="Firefox"><Icon name="firefox" size={12} /></Task>
    <Task $open aria-label="Visual Studio"><Icon name="vs" size={11} /></Task>
    <Task $open $active aria-label="MicroStation"><Icon name="mu" size={11} /></Task>
    <Tray>
      {['up', 'pc', 'sound', 'ink'].map(name => <Icon key={name} name={name} size={9} />)}
      <span>ENG</span>
      <Clock>13:47<br />2021/12/1 星期三</Clock>
    </Tray>
  </Taskbar>
)

const App = () => {
  return (
    <Page>
      <GlobalStyle />
      <TopBar />
      <RibbonBar />
      <ViewBar />
      <Canvas>
        <Grid />
        <ElementSelection />
        <KeyIn />
        <HelloBox />
        <Playback>
          <Played />
          <Knob aria-label="进度" />
          <Rest />
        </Playback>
      </Canvas>
      <Status />
      <WindowsBar />
      <PlayerFrame>
        <IconButton $color="#ccc" aria-label="最小化"><Icon name="min" size={8} /></IconButton>
        <IconButton $color="#ccc" aria-label="还原"><Icon name="restore" size={8} /></IconButton>
      </PlayerFrame>
    </Page>
  )
}

export default App;
